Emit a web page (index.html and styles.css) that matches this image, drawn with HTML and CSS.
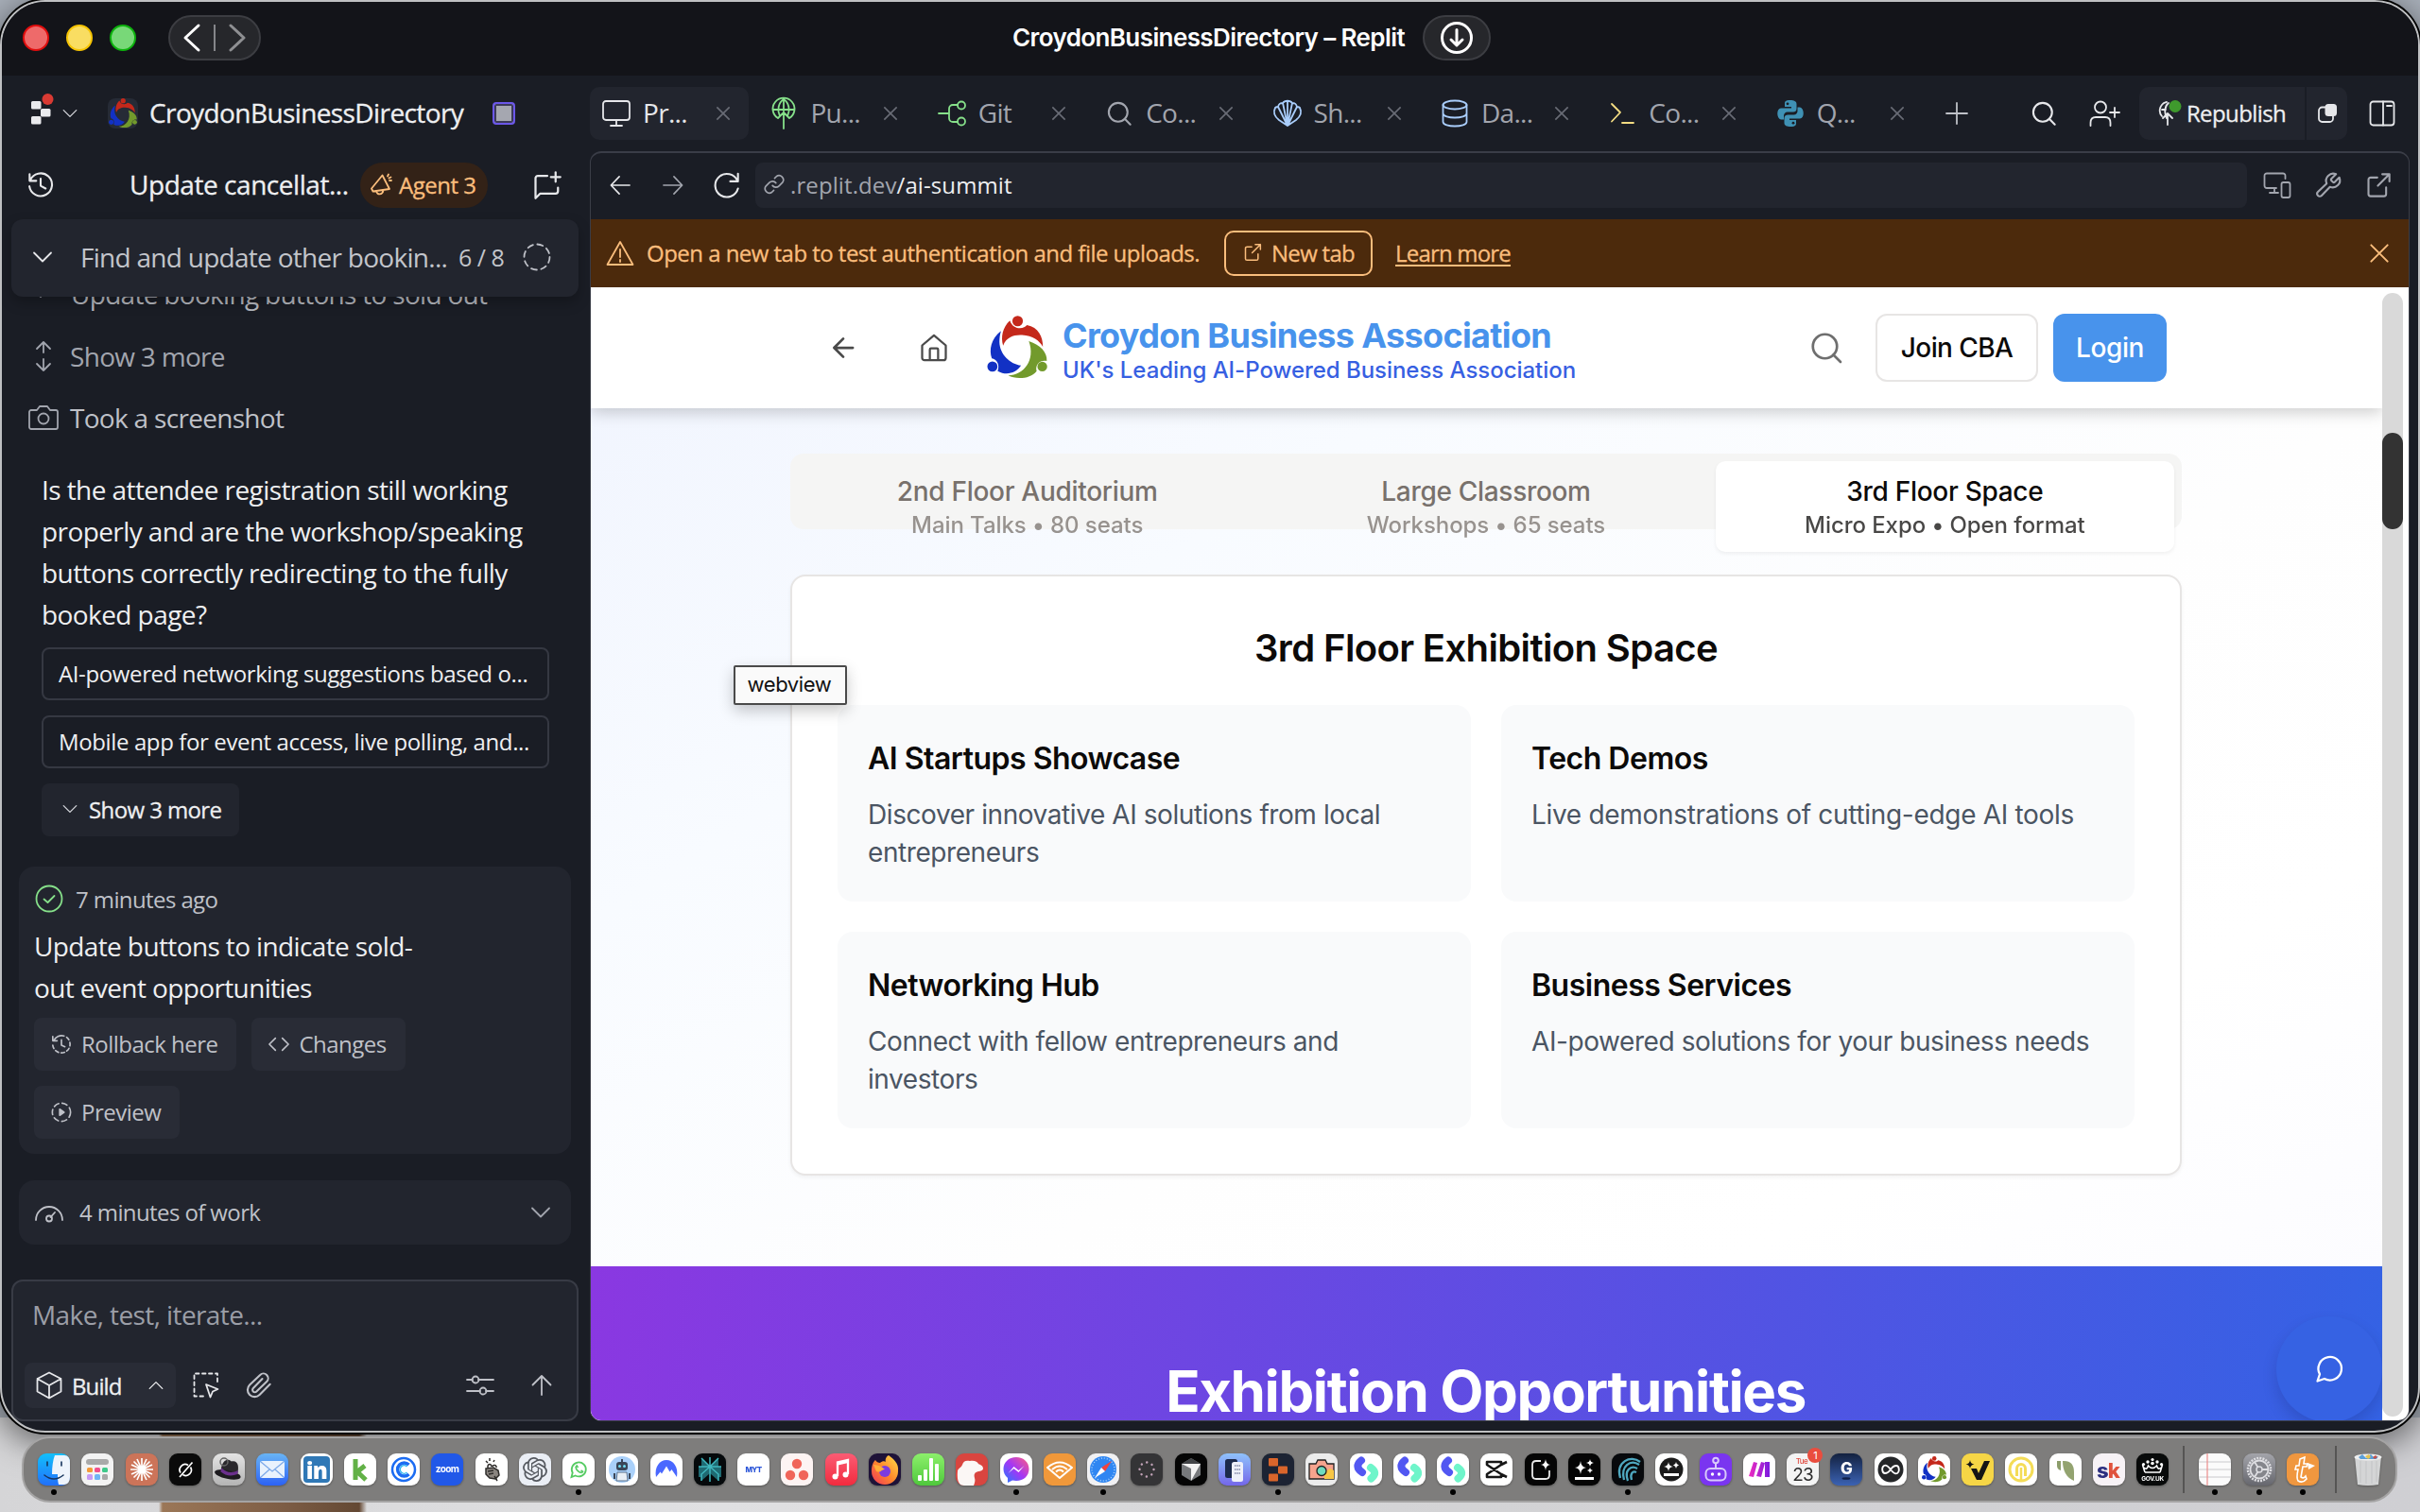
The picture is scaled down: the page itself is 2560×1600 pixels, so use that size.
FILE: index.html
```html
<!DOCTYPE html>
<html lang="en">
<head>
<meta charset="utf-8">
<title>CroydonBusinessDirectory – Replit</title>
<link rel="stylesheet" href="styles.css">
</head>
<body>
<svg class="defs" aria-hidden="true">
  <symbol id="cba" viewBox="0 0 62 66">
    <circle cx="31.5" cy="5.6" r="5.4" fill="#c4281b"/><path fill="#c4281b" d="M23.5 5C16 12 14 22 16.6 30.7 20 22 28 19.5 36 20c11 .5 18 6 21.400 12C57.500 22 53 12 41 9.800 38 14 27 15 23.500 5Z"/>
    <circle cx="5.600" cy="52.300" r="5.200" fill="#1231c4"/><path fill="#1231c4" d="M14.400 15.700C4 24 2 35 5 44c5 1 8.500 6 6 13 9 5 19 2 24-5.700C24 50 13 40 12.800 27c0-4 .6-8 1.600-11.300Z"/>
    <circle cx="56.800" cy="52.300" r="5" fill="#729a2c"/><path fill="#729a2c" d="M43 26.300C55 30 62 38 61.400 46.500 55 45 49 50 51 57c-6 8-21 9-29.200 4.500C38 61 50 46 43 26.300Z"/>
  </symbol>
  <symbol id="x" viewBox="0 0 24 24"><path d="M4 4l16 16M20 4L4 20"/></symbol>
  <symbol id="down" viewBox="0 0 24 24"><path d="M3 7.500l9 9 9-9"/></symbol>
  <symbol id="search" viewBox="0 0 24 24"><circle cx="11" cy="11" r="8.500"/><path d="M17 17l5 5"/></symbol>
  <symbol id="ext" viewBox="0 0 24 24"><path d="M11 5H5a2 2 0 0 0-2 2v13a2 2 0 0 0 2 2h12a2 2 0 0 0 2-2v-6M15.500 2H22v6.500M22 2L11.500 12.500"/></symbol>
  <symbol id="hist" viewBox="0 0 24 24"><path d="M2 2v6h6M2.500 7.500A10.300 10.300 0 1 1 1.800 13M12 6v6.500l4.500 2.500"/></symbol>
  <symbol id="split" viewBox="0 0 34 34"><rect width="34" height="34" rx="9" fill="#fff"/><path d="M12 7.500c-5 4-5 8.500 1 12.500" stroke="#5257f2" stroke-width="8" fill="none" stroke-linecap="round"/><path d="M22 15c5.500 4 5.500 7 .5 11.500" stroke="#6ff5ca" stroke-width="8" fill="none" stroke-linecap="round"/></symbol>
  <linearGradient id="gFinder" x2="0" y2="1"><stop stop-color="#12c0fb"/><stop offset="1" stop-color="#2270fb"/></linearGradient>
  <linearGradient id="gMail" x2="0" y2="1"><stop stop-color="#68b4f5"/><stop offset="1" stop-color="#2c62f4"/></linearGradient>
  <linearGradient id="gMusic" x2="0" y2="1"><stop stop-color="#fb5c74"/><stop offset="1" stop-color="#f22b3e"/></linearGradient>
  <linearGradient id="gFox" x1="1" x2="0" y2="1"><stop stop-color="#ffe04a"/><stop offset=".5" stop-color="#ff8a2c"/><stop offset="1" stop-color="#f0335a"/></linearGradient>
  <linearGradient id="gNum" x2="0" y2="1"><stop stop-color="#8cf06b"/><stop offset="1" stop-color="#4fc83c"/></linearGradient>
  <linearGradient id="gMsg" x1="1" x2="0" y2="1"><stop stop-color="#ff5f80"/><stop offset=".5" stop-color="#a436f5"/><stop offset="1" stop-color="#1f7cff"/></linearGradient>
  <linearGradient id="gPhone" x2="0" y2="1"><stop stop-color="#8fc2fb"/><stop offset="1" stop-color="#7467ea"/></linearGradient>
  <linearGradient id="gMake" x2="1"><stop stop-color="#f02bc0"/><stop offset="1" stop-color="#7a1be0"/></linearGradient>
  <linearGradient id="gG" x2="0" y2="1"><stop stop-color="#13213f"/><stop offset="1" stop-color="#3b62b3"/></linearGradient>
  <linearGradient id="gGrey" x2="0" y2="1"><stop stop-color="#e4e4e4"/><stop offset="1" stop-color="#b4b4b4"/></linearGradient>
  <linearGradient id="gGear" x2="0" y2="1"><stop stop-color="#a3a4aa"/><stop offset="1" stop-color="#66676e"/></linearGradient>
</svg>

<div class="desktop">
<main class="window">
  <header class="titlebar">
    <div class="lights"><i class="red"></i><i class="yellow"></i><i class="green"></i></div>
    <div class="navpill">
      <svg width="20" height="30" viewBox="0 0 20 30" class="w3 white"><path d="M17 2L3 15l14 13"/></svg>
      <b></b>
      <svg width="20" height="30" viewBox="0 0 20 30" class="w3 mid"><path d="M3 2l14 13L3 28"/></svg>
    </div>
    <h1>CroydonBusinessDirectory – Replit</h1>
    <div class="download"><svg width="36" height="36" viewBox="0 0 36 36" class="w3 white"><circle cx="18" cy="18" r="15.500"/><path d="M18 9.500v16M12 20l6 6 6-6"/></svg></div>
  </header>

  <div class="workspace">
    <aside class="sidebar">
      <div class="project">
        <svg class="replit" width="24" height="36" viewBox="0 0 24 36"><g fill="#e9eaed"><rect y="8" width="10.500" height="8.500" rx="1.500"/><rect x="10" y="16" width="10.500" height="8.500" rx="1.500"/><rect y="24" width="10.500" height="8.500" rx="1.500"/></g><circle cx="17.500" cy="6" r="6" fill="#d93a33"/></svg>
        <svg class="chev w2 soft" width="18" height="18" viewBox="0 0 24 24"><use href="#down"/></svg>
        <span class="appicon"><svg width="32" height="32"><use href="#cba"/></svg></span>
        <strong>CroydonBusinessDirectory</strong>
        <span class="boost"></span>
      </div>

      <div class="thread">
        <svg class="w2 bright" width="30" height="28" viewBox="0 0 24 24"><use href="#hist"/></svg>
        <strong>Update cancellat...</strong>
        <span class="agent"><svg width="24" height="24" viewBox="0 0 24 24" class="w2 orange"><path d="M13.500 2.500L21 17 3.500 19.500 2 16.500ZM7.500 19.500c0 4 6 4 7-1M19 3.500l1-2M21 8h2M20.500 5.500l2-1"/></svg>Agent 3</span>
        <svg class="w2 bright newchat" width="30" height="30" viewBox="0 0 24 24"><path d="M12 4H4a2 2 0 0 0-2 2v17l4-4h13a2 2 0 0 0 2-2v-3M19 1v8M15 5h8"/></svg>
      </div>

      <div class="task">
        <svg class="w2 bright" width="24" height="24" viewBox="0 0 24 24"><use href="#down"/></svg>
        <span class="name">Find and update other bookin...</span>
        <span class="count">6 / 8</span>
        <svg width="30" height="30" viewBox="0 0 30 30" class="w2 grey"><circle cx="15" cy="15" r="13.500" stroke-dasharray="6 4.600"/></svg>
      </div>

      <section class="chat">
        <div class="step first"><svg class="w2 dim" width="18" height="18" viewBox="0 0 24 24"><use href="#down"/></svg><span>Update booking buttons to sold out</span></div>
        <div class="step more"><svg class="w2 dim" width="32" height="34" viewBox="0 0 32 34"><path d="M16 13V2M9 9l7-7 7 7M16 20v12M9 25l7 7 7-7"/></svg><span>Show 3 more</span></div>
        <div class="step shot"><svg class="w2 dim" width="32" height="28" viewBox="0 0 32 28"><path d="M3 6h6l3-4h8l3 4h6a2 2 0 0 1 2 2v16a2 2 0 0 1-2 2H3a2 2 0 0 1-2-2V8a2 2 0 0 1 2-2Z"/><circle cx="16" cy="15" r="5.500"/></svg><span>Took a screenshot</span></div>
        <p class="question">Is the attendee registration still working<br>properly and are the workshop/speaking<br>buttons correctly redirecting to the fully<br>booked page?</p>
        <div class="option">AI-powered networking suggestions based o...</div>
        <div class="option">Mobile app for event access, live polling, and...</div>
        <div class="showmore"><svg class="w2 soft" width="18" height="18" viewBox="0 0 24 24"><use href="#down"/></svg>Show 3 more</div>

        <article class="checkpoint">
          <div class="when"><svg width="30" height="30" viewBox="0 0 30 30" class="w2 lime"><circle cx="15" cy="15" r="13.500"/><path d="M9.500 15.500l4 3.500 7-7"/></svg>7 minutes ago</div>
          <p>Update buttons to indicate sold-<br>out event opportunities</p>
          <div class="actions">
            <span><svg class="w2 grey" width="22" height="22" viewBox="0 0 24 24"><path d="M2 3v5h5M3 8a10 10 0 0 1 12-5.500M12 7v6l4 2"/><path d="M18 4a10 10 0 1 1-16 9" stroke-dasharray="4 3"/></svg>Rollback here</span>
            <span><svg class="w2 grey" width="22" height="22" viewBox="0 0 24 24"><path d="M8 5l-7 7 7 7M16 5l7 7-7 7"/></svg>Changes</span>
            <span><svg class="w2 grey" width="22" height="22" viewBox="0 0 24 24"><circle cx="12" cy="12" r="10.500" stroke-dasharray="6 4"/><path d="M10 8.500v7l5-3.500Z" fill="#bfc1c8"/></svg>Preview</span>
          </div>
        </article>

        <div class="work"><svg width="30" height="24" viewBox="0 0 30 24" class="w2 grey"><path d="M1 20a14 14 0 0 1 28 0M21 12l-4.500 5"/><circle cx="15" cy="18.500" r="3"/></svg><span>4 minutes of work</span><svg class="w2 dim" width="24" height="24" viewBox="0 0 24 24"><use href="#down"/></svg></div>
      </section>

      <section class="composer">
        <p>Make, test, iterate...</p>
        <div class="tools">
          <span class="build"><svg width="28" height="30" viewBox="0 0 28 30" class="w2 bright"><path d="M14 1.500l12.500 6.500v13.500L14 28.500 1.500 21.500V8ZM1.500 8L14 15l12.500-7M14 15v13.500"/></svg>Build<svg class="w2 bright up" width="18" height="18" viewBox="0 0 24 24"><use href="#down"/></svg></span>
          <svg width="28" height="28" viewBox="0 0 28 28" class="w2 bright"><path d="M26 10V1.500H1.500v24H12" stroke-dasharray="3.500 3.500"/><path d="M14 13l12.500 5-5.500 2.500-2.500 6Z"/></svg>
          <svg width="28" height="28" viewBox="0 0 24 24" class="w2 grey"><path d="M22 11l-9.500 9.500a6.200 6.200 0 0 1-9-9L13 2.500a4.200 4.200 0 0 1 6 6L9.700 17.500a2.100 2.100 0 0 1-3-3L15 6"/></svg>
          <i class="fill"></i>
          <svg width="30" height="24" viewBox="0 0 30 24" class="w2 grey"><path d="M1 6h6M13 6h16M1 18h14M21 18h8"/><circle cx="10" cy="6" r="3.500"/><circle cx="18" cy="18" r="3.500"/></svg>
          <svg width="24" height="24" viewBox="0 0 24 24" class="w2 grey send"><path d="M12 22V2.500M2.500 11.500L12 2l9.500 9.500"/></svg>
        </div>
      </section>
    </aside>

    <section class="main">
      <nav class="tabs">
        <div class="tab active"><svg width="30" height="30" viewBox="0 0 30 30" class="w2 bright"><rect x="1" y="2" width="28" height="20" rx="3"/><path d="M15 22v6M9 28h12"/></svg><span>Pr...</span><svg class="close" width="20" height="20" viewBox="0 0 24 24"><use href="#x"/></svg></div>
        <div class="tab"><svg width="30" height="34" viewBox="0 0 30 34" class="w2 lime"><path d="M9 22A11.500 11.500 0 1 1 21 22M4 13h22M11 20c-3-6-2-14 4-18 6 4 7 12 4 18M15 33V15M9 22l6-6 6 6M15 2v12"/></svg><span>Pu...</span><svg class="close" width="20" height="20" viewBox="0 0 24 24"><use href="#x"/></svg></div>
        <div class="tab"><svg width="30" height="28" viewBox="0 0 30 28" class="w2 lime"><path d="M1 14h11M21 5h-5a4 4 0 0 0-4 4v10a4 4 0 0 0 4 4h5"/><circle cx="25" cy="5.500" r="4"/><circle cx="25" cy="22.500" r="4"/></svg><span>Git</span><svg class="close" width="20" height="20" viewBox="0 0 24 24"><use href="#x"/></svg></div>
        <div class="tab"><svg width="28" height="28" viewBox="0 0 24 24" class="w2 dim"><use href="#search"/></svg><span>Co...</span><svg class="close" width="20" height="20" viewBox="0 0 24 24"><use href="#x"/></svg></div>
        <div class="tab"><svg width="30" height="30" viewBox="0 0 30 30" class="w2 sky"><path d="M15 28L6 22C1 18 0 13 2 9c1-1 2-1 3-1 1-4 3-4 5-4 2-3 8-3 10 0 2 0 4 0 5 4 1 0 2 0 3 1 2 4 1 9-4 13ZM15 28L5 8M15 28L10 4M15 28V2M15 28l5-24M15 28L25 8"/></svg><span>Sh...</span><svg class="close" width="20" height="20" viewBox="0 0 24 24"><use href="#x"/></svg></div>
        <div class="tab"><svg width="30" height="30" viewBox="0 0 30 30" class="w2 sky"><ellipse cx="15" cy="6" rx="12.500" ry="4.500"/><path d="M2.500 6v18c0 6 25 6 25 0V6M2.500 15c0 6 25 6 25 0"/></svg><span>Da...</span><svg class="close" width="20" height="20" viewBox="0 0 24 24"><use href="#x"/></svg></div>
        <div class="tab"><svg width="30" height="26" viewBox="0 0 30 26" class="w2 gold"><path d="M4 3l9 9-9 9.500M15 23h12"/></svg><span>Co...</span><svg class="close" width="20" height="20" viewBox="0 0 24 24"><use href="#x"/></svg></div>
        <div class="tab"><svg width="30" height="30" viewBox="0 0 30 30"><g fill="#3f91b4"><path d="M15 1c-6 0-6 2-6 4v3h7v1.500H5c-5 0-5 11 0 12h3v-4c0-2 1.500-4 4-4h6c2 0 3.500-1 3.500-3.500V5c0-3-3-4-6.500-4Z"/><path d="M15 29c6 0 6-2 6-4v-3h-7v-1.500h11c5 0 5-11 0-12h-2.500v4c0 2-1.500 4-4 4h-6c-2 0-4 1-4 3.500V25c0 3 3 4 6.500 4Z"/></g><circle cx="12" cy="4.800" r="1.400" fill="#1a1d25"/><circle cx="18" cy="25.200" r="1.400" fill="#1a1d25"/></svg><span>Q...</span><svg class="close" width="20" height="20" viewBox="0 0 24 24"><use href="#x"/></svg></div>
        <svg class="w2 grey plus" width="24" height="24" viewBox="0 0 24 24"><path d="M12 1v22M1 12h22"/></svg>
        <i class="fill"></i>
        <svg class="w2 bright" width="28" height="28" viewBox="0 0 24 24"><use href="#search"/></svg>
        <svg class="w2 bright invite" width="32" height="28" viewBox="0 0 32 28"><circle cx="12" cy="7.500" r="6"/><path d="M1.500 27v-3c0-3.500 2-6 5.500-6h10c3.500 0 5.500 2.500 5.500 6v3M27 8v10M22 13h10"/></svg>
        <div class="publish"><span class="pubmain"><svg width="26" height="28" viewBox="0 0 26 28" class="w2 bright"><path d="M4 18C-1 12 3 4 9 3M4 11h4M9 20c-3-6-2-13 2-16M10 27V15M5 20l5-5 5 5"/><circle cx="18" cy="7.500" r="6.500" fill="#3f9a2d" stroke="none"/></svg>Republish</span><span class="pubside"><svg width="20" height="20" viewBox="0 0 20 20"><rect x="1" y="3.500" width="15" height="15.500" rx="3.500" fill="none" stroke="#e6e7ea" stroke-width="1.800"/><rect x="7.500" y="0" width="12.500" height="13" rx="3.500" fill="#e6e7ea"/></svg></span></div>
        <svg class="w2 bright layout" width="28" height="28" viewBox="0 0 28 28"><rect x="1.500" y="1.500" width="25" height="25" rx="3"/><path d="M15 1.500v25M19 6h5"/></svg>
      </nav>

      <div class="pane">
        <div class="address">
          <svg class="w2 bright back" width="22" height="22" viewBox="0 0 24 24"><path d="M23 12H2M11 2L1.500 12l9.500 10"/></svg>
          <svg class="w2 dim fwd" width="22" height="22" viewBox="0 0 24 24"><path d="M1 12h21M13 2l9.500 10L13 22"/></svg>
          <svg class="w2 bright reload" width="30" height="28" viewBox="0 0 24 24"><path d="M22 1.500v7h-7M21.500 8A10.500 10.500 0 1 0 22 15"/></svg>
          <div class="url"><svg width="22" height="22" viewBox="0 0 24 24" class="w2 dim"><path d="M10 13.500a5 5 0 0 0 7.500.5l4-4a5 5 0 0 0-7-7l-2 2M14 10.500a5 5 0 0 0-7.500-.5l-4 4a5 5 0 0 0 7 7l2-2"/></svg><span><em>.replit.dev</em>/ai-summit</span></div>
          <svg class="w2 dim" width="30" height="28" viewBox="0 0 30 28"><path d="M14 17H4a2.500 2.500 0 0 1-2.500-2.500V4A2.500 2.500 0 0 1 4 1.500h17A2.500 2.500 0 0 1 23.500 4v3M12 17v5M7 22h9"/><rect x="19.500" y="11" width="9" height="16" rx="2"/></svg>
          <svg class="w2 dim" width="28" height="28" viewBox="0 0 24 24"><path d="M14.700 6.300a1 1 0 0 0 0 1.400l1.600 1.600a1 1 0 0 0 1.400 0l4.300-4.300a6.500 6.500 0 0 1-8.500 8.500l-7.600 7.900a2.300 2.300 0 0 1-3.300-3.300l7.900-7.600A6.500 6.500 0 0 1 19 2Z"/></svg>
          <svg class="w2 dim" width="28" height="28" viewBox="0 0 24 24"><use href="#ext"/></svg>
        </div>
        <div class="banner">
          <svg width="30" height="28" viewBox="0 0 30 28" class="w2 orange"><path d="M15 2L28.500 26h-27ZM15 10v8M15 21v2"/></svg>
          <span class="msg">Open a new tab to test authentication and file uploads.</span>
          <span class="newtab"><svg width="20" height="20" viewBox="0 0 24 24" class="w2 orange"><use href="#ext"/></svg>New tab</span>
          <span class="learn">Learn more</span>
          <i class="fill"></i>
          <svg width="26" height="26" viewBox="0 0 24 24" class="w2 orange"><use href="#x"/></svg>
        </div>

        <div class="webview">
          <div class="site">
            <header class="sitehead">
              <svg width="22" height="22" viewBox="0 0 24 24" class="w3 ink"><path d="M23 12H2M12 1.500L1.500 12 12 22.500"/></svg>
              <svg width="30" height="30" viewBox="0 0 24 24" class="w2 ink home"><path d="M2 10l10-8.500L22 10v10.500a2 2 0 0 1-2 2H4a2 2 0 0 1-2-2ZM8.500 22.500v-9a1 1 0 0 1 1-1h5a1 1 0 0 1 1 1v9"/></svg>
              <svg width="64" height="68"><use href="#cba"/></svg>
              <div class="brand"><strong>Croydon Business Association</strong><span>UK's Leading AI-Powered Business Association</span></div>
              <i class="fill"></i>
              <svg width="36" height="36" viewBox="0 0 24 24" class="w2 ash"><use href="#search"/></svg>
              <span class="join">Join CBA</span>
              <span class="login">Login</span>
            </header>
            <section class="venue">
              <div class="floors">
                <div><b>2nd Floor Auditorium</b><span>Main Talks • 80 seats</span></div>
                <div><b>Large Classroom</b><span>Workshops • 65 seats</span></div>
                <div class="on"><b>3rd Floor Space</b><span>Micro Expo • Open format</span></div>
              </div>
              <div class="card">
                <h2>3rd Floor Exhibition Space</h2>
                <div class="grid">
                  <div><h3>AI Startups Showcase</h3><p>Discover innovative AI solutions from local entrepreneurs</p></div>
                  <div><h3>Tech Demos</h3><p class="loose">Live demonstrations of cutting-edge AI tools</p></div>
                  <div><h3>Networking Hub</h3><p>Connect with fellow entrepreneurs and investors</p></div>
                  <div><h3>Business Services</h3><p>AI-powered solutions for your business needs</p></div>
                </div>
              </div>
            </section>
            <section class="promo"><h2>Exhibition Opportunities</h2>
              <span class="bubble"><svg width="30" height="30" viewBox="0 0 24 24" class="w2 white"><path d="M7.900 20A9.800 9.800 0 1 0 4 16.100L2 22Z"/></svg></span>
            </section>
          </div>
          <div class="scroll"><i></i></div>
        </div>
      </div>
    </section>
  </div>
</main>
<div class="tooltip">webview</div>

<footer class="dock">
  <span class="run"><svg viewBox="0 0 34 34"><rect width="34" height="34" rx="9" fill="url(#gFinder)"/><path d="M18 2h10q6 0 6 8v15q0 7-6 8h-6c-1-4-1-7-1-11h-6C15 14 16 7 18 2Z" fill="#eef4fc"/><path d="M10 9v4M25 9v4M7 23q10 8 20 0" stroke="#16345c" stroke-width="1.600" fill="none" stroke-linecap="round"/></svg></span>
  <span><svg viewBox="0 0 34 34"><rect width="34" height="34" rx="9" fill="#f3f3f3"/><rect x="5" y="6" width="24" height="6" rx="3" fill="#a9a9a9"/><rect x="6" y="15" width="6" height="5" rx="1.500" fill="#f59a37"/><rect x="14" y="15" width="6" height="5" rx="1.500" fill="#f2508c"/><rect x="22" y="15" width="6" height="5" rx="1.500" fill="#3fc98b"/><rect x="6" y="22" width="6" height="6" rx="1.500" fill="#c89af5"/><rect x="14" y="22" width="6" height="6" rx="1.500" fill="#6fb5f5"/><rect x="22" y="22" width="6" height="6" rx="1.500" fill="#a9a9a9"/></svg></span>
  <span><svg viewBox="0 0 34 34"><rect width="34" height="34" rx="9" fill="#cc7459"/><path d="M17 5v24M5 17h24M8.500 8.500l17 17M25.500 8.500l-17 17M12 6l10 22M22 6L12 28M6 12l22 10M28 12L6 22" stroke="#fff" stroke-width="1.700"/></svg></span>
  <span><svg viewBox="0 0 34 34"><rect width="34" height="34" rx="9" fill="#0a0a0a"/><path d="M20 12.500a5.800 5.800 0 0 0-8 8M14.500 22.500a5.800 5.800 0 0 0 8-8M11 25L24.500 9.500" fill="none" stroke="#fff" stroke-width="1.700"/></svg></span>
  <span><svg viewBox="0 0 34 34"><rect width="34" height="34" rx="9" fill="url(#gGrey)"/><g transform="rotate(12 17 17)"><path d="M9 19C8 9 13 5 18 8c7-3 9 4 9 11Z" fill="#2a282c"/><ellipse cx="17" cy="22.500" rx="14" ry="4.500" fill="#1d1b1f"/><path d="M9 17q9 6 18-1v4q-9 6-18 1Z" fill="#6a2f8c"/></g><circle cx="12" cy="9" r="4" fill="none" stroke="#666" stroke-width="1.500"/></svg></span>
  <span><svg viewBox="0 0 34 34"><rect width="34" height="34" rx="9" fill="url(#gMail)"/><rect x="4" y="8" width="26" height="18" rx="2.500" fill="#e9f2fd"/><path d="M5 9l12 10L29 9M5 25l9-8M29 25l-9-8" stroke="#7da9e8" stroke-width="1.300" fill="none"/></svg></span>
  <span><svg viewBox="0 0 34 34"><rect width="34" height="34" rx="9" fill="#fff"/><rect x="3" y="3" width="28" height="28" rx="4" fill="#2f78b6"/><text x="17" y="27" text-anchor="middle" font-family="Open Sans" font-weight="800" font-size="24" fill="#fff">in</text></svg></span>
  <span><svg viewBox="0 0 34 34"><rect width="34" height="34" rx="9" fill="#fff"/><path d="M12 6v22M22 13l-8 6.500L23 28" stroke="#62b146" stroke-width="5" fill="none"/></svg></span>
  <span><svg viewBox="0 0 34 34"><rect width="34" height="34" rx="9" fill="#fff"/><circle cx="17" cy="17" r="12" fill="none" stroke="#1b6cf2" stroke-width="2.500"/><path d="M22.500 12a7 7 0 1 0 0 10" stroke="#1b6cf2" stroke-width="3.500" fill="none"/><path d="M20.500 14a4.200 4.200 0 1 0 0 6" stroke="#31b8f0" stroke-width="1.500"/></svg></span>
  <span><svg viewBox="0 0 34 34"><rect width="34" height="34" rx="9" fill="#2158e8"/><text x="17" y="20" text-anchor="middle" font-family="Inter" font-weight="700" font-size="10" fill="#fff">zoom</text></svg></span>
  <span><svg viewBox="0 0 34 34"><rect width="34" height="34" rx="9" fill="#fff"/><path d="M11 16l8-1 5 3 1 5-4 4-6-1-4-4Z" fill="#8a8580" stroke="#2e2c2a" stroke-width="1.500"/><path d="M13 15a2 3 0 1 1 4-1M18 14a2 2 0 1 1 4 1M11 8l2 2M15 5v3M20 7l-1 2M20 24l3 5M13 19l6-1M14 22l5-1" stroke="#2e2c2a" stroke-width="1.500" fill="none"/></svg></span>
  <span><svg viewBox="0 0 34 34"><rect width="34" height="34" rx="9" fill="#eaeef5"/><path transform="translate(4 4) scale(1.080)" fill="#555960" d="M22.2819 9.8211a5.9847 5.9847 0 0 0-.5157-4.9108 6.0462 6.0462 0 0 0-6.5098-2.9A6.0651 6.0651 0 0 0 4.9807 4.1818a5.9847 5.9847 0 0 0-3.9977 2.9 6.0462 6.0462 0 0 0 .7427 7.0966 5.98 5.98 0 0 0 .511 4.9107 6.051 6.051 0 0 0 6.5146 2.9001A5.9847 5.9847 0 0 0 13.2599 24a6.0557 6.0557 0 0 0 5.7718-4.2058 5.9894 5.9894 0 0 0 3.9977-2.9001 6.0557 6.0557 0 0 0-.7475-7.0729zm-9.022 12.6081a4.4755 4.4755 0 0 1-2.8764-1.0408l.1419-.0804 4.7783-2.7582a.7948.7948 0 0 0 .3927-.6813v-6.7369l2.02 1.1686a.071.071 0 0 1 .038.052v5.5826a4.504 4.504 0 0 1-4.4945 4.4944zm-9.6607-4.1254a4.4708 4.4708 0 0 1-.5346-3.0137l.142.0852 4.783 2.7582a.7712.7712 0 0 0 .7806 0l5.8428-3.3685v2.3324a.0804.0804 0 0 1-.0332.0615L9.74 19.9502a4.4992 4.4992 0 0 1-6.1408-1.6464zM2.3408 7.8956a4.485 4.485 0 0 1 2.3655-1.9728V11.6a.7664.7664 0 0 0 .3879.6765l5.8144 3.3543-2.0201 1.1685a.0757.0757 0 0 1-.071 0l-4.8303-2.7865A4.504 4.504 0 0 1 2.3408 7.872zm16.5963 3.8558L13.1038 8.364 15.1192 7.2a.0757.0757 0 0 1 .071 0l4.8303 2.7913a4.4944 4.4944 0 0 1-.6765 8.1042v-5.6772a.79.79 0 0 0-.407-.667zm2.0107-3.0231l-.142-.0852-4.7735-2.7818a.7759.7759 0 0 0-.7854 0L9.409 9.2297V6.8974a.0662.0662 0 0 1 .0284-.0615l4.8303-2.7866a4.4992 4.4992 0 0 1 6.6802 4.66zM8.3065 12.863l-2.02-1.1638a.0804.0804 0 0 1-.038-.0567V6.0742a4.4992 4.4992 0 0 1 7.3757-3.4537l-.142.0805L8.704 5.459a.7948.7948 0 0 0-.3927.6813zm1.0976-2.3654l2.602-1.4998 2.6069 1.4998v2.9994l-2.5974 1.4997-2.6067-1.4997Z"/></svg></span>
  <span class="run"><svg viewBox="0 0 34 34"><rect width="34" height="34" rx="9" fill="#fff"/><path d="M9.500 25l1.200-4.500a7.500 7.500 0 1 1 3 3Z" fill="none" stroke="#55cb62" stroke-width="1.800"/><path d="M14 14c0 3 3.500 6.500 6.500 6.500M14 14l1.200-1 1.300 2M20.500 20.500l1-1.200-2-1.300" fill="none" stroke="#55cb62" stroke-width="1.600"/></svg></span>
  <span><svg viewBox="0 0 34 34"><rect width="34" height="34" rx="9" fill="#fff"/><circle cx="17" cy="17" r="14" fill="#a9d0fa"/><rect x="11" y="9" width="12" height="9" rx="3" fill="#3b4658"/><circle cx="14.500" cy="13.500" r="1.500" fill="#6fe0f5"/><circle cx="19.500" cy="13.500" r="1.500" fill="#6fe0f5"/><path d="M12 20h10l1 9H11Z" fill="#e8eef5" stroke="#58708c"/><path d="M17 6v3M9 21v6M25 21v6" stroke="#3b4658" stroke-width="2"/></svg></span>
  <span><svg viewBox="0 0 34 34"><rect width="34" height="34" rx="9" fill="#fff"/><path d="M6 25C4 14 10 7 17 7s13 7 11 18l-5.500-8-2 2.500-3.500-6-5 8-1.500-2Z" fill="#4a68ff"/></svg></span>
  <span><svg viewBox="0 0 34 34"><rect width="34" height="34" rx="9" fill="#05090b"/><path d="M8 5l9 9 9-9v9h3v11h-3v4l-9-8-9 8v-4H5V14h3Z" fill="#1f6a72"/><path d="M17 4v26M8 5l9 9 9-9M8 29v-7l9-8 9 8v7M5 14h24" stroke="#3fb6bd" stroke-width="1.500" fill="none"/></svg></span>
  <span><svg viewBox="0 0 34 34"><rect width="34" height="34" rx="9" fill="#fff"/><text x="17" y="20" text-anchor="middle" font-family="Inter" font-weight="800" font-size="8" fill="#2b55d8">MYT</text></svg></span>
  <span><svg viewBox="0 0 34 34"><rect width="34" height="34" rx="9" fill="#fdf4f3"/><g fill="#f0655a"><circle cx="17" cy="11" r="5.200"/><circle cx="10" cy="23" r="5.200"/><circle cx="24" cy="23" r="5.200"/></g></svg></span>
  <span><svg viewBox="0 0 34 34"><rect width="34" height="34" rx="9" fill="url(#gMusic)"/><path d="M13 24V9.500l11-2.500v15" stroke="#fff" stroke-width="2.300" fill="none"/><path d="M13 11l11-2.500" stroke="#fff" stroke-width="3"/><circle cx="10.500" cy="24.500" r="3" fill="#fff"/><circle cx="21.500" cy="22.500" r="3" fill="#fff"/></svg></span>
  <span><svg viewBox="0 0 34 34"><rect width="34" height="34" rx="9" fill="#1e1238"/><path d="M21 2c5 4 11 8 10 17A14 14 0 0 1 3 19C3 12 5 9 7 7c1 2 3 3 5 3 2-2 5-2 6-1-1-3 1-6 3-7Z" fill="url(#gFox)"/><circle cx="17" cy="19" r="6" fill="#7b3be0"/><path d="M5 12c6 0 10 3 12 5-4 0-4 4-9 2Z" fill="#ffae38"/></svg></span>
  <span><svg viewBox="0 0 34 34"><rect width="34" height="34" rx="9" fill="url(#gNum)"/><g fill="#fff"><rect x="6" y="23" width="4" height="6" rx="1"/><rect x="12" y="17" width="4" height="12" rx="1"/><rect x="18" y="5" width="4" height="24" rx="1"/><rect x="24" y="11" width="4" height="18" rx="1"/></g></svg></span>
  <span><svg viewBox="0 0 34 34"><rect width="34" height="34" rx="9" fill="#d9453f"/><path d="M2 19c0-3 4-4 5-7 1-4 4-5 8-4 5-1 8 1 9 3 2 1 5 2 5 5 0 2-3 3-5 3-4 1-5 3-4 7 1 3 0 5-1 8H9C4 34 1 30 2 19Z" fill="#fbf7f5"/></svg></span>
  <span class="run"><svg viewBox="0 0 34 34"><rect width="34" height="34" rx="9" fill="#fff"/><path d="M17 4c8 0 13.500 5.500 13.500 12.500S25 29 17 29l-4-.5-5 2.500v-5C5 23.500 3.500 20.500 3.500 16.500 3.500 9.500 9 4 17 4Z" fill="url(#gMsg)"/><path d="M8.500 21l6-7 5 4 6-5-6 7-5-4Z" fill="#fff"/></svg></span>
  <span><svg viewBox="0 0 34 34"><rect width="34" height="34" rx="9" fill="#f0983a"/><path d="M4 15q13-11 26 0L17 26ZM9 17q8-7 16 0M13 19.500q4-4 8 0" stroke="#fff" stroke-width="2" fill="none" stroke-linejoin="round"/></svg></span>
  <span class="run"><svg viewBox="0 0 34 34"><rect width="34" height="34" rx="9" fill="#f1f1f3"/><circle cx="17" cy="17" r="14" fill="#2f86f2"/><circle cx="17" cy="17" r="12" fill="none" stroke="#a9d2fb" stroke-width="1.500" stroke-dasharray="1 2"/><path d="M26 8l-7 11-4-4Z" fill="#f2433c"/><path d="M8 26l7-11 4 4Z" fill="#fff"/></svg></span>
  <span><svg viewBox="0 0 34 34"><rect width="34" height="34" rx="9" fill="#343436"/><circle cx="17" cy="17" r="7.500" fill="none" stroke="#c2a3b8" stroke-width="2.400" stroke-dasharray=".1 5.790" stroke-linecap="round"/></svg></span>
  <span><svg viewBox="0 0 34 34"><rect width="34" height="34" rx="9" fill="#050505"/><path d="M17 5l10 6v12l-10 6-10-6V11Z" fill="#77797c"/><path d="M7 11h20L17 29V16Z" fill="#f3f3f3"/><path d="M17 5l10 6H7Z" fill="#424447"/></svg></span>
  <span><svg viewBox="0 0 34 34"><rect width="34" height="34" rx="9" fill="url(#gPhone)"/><rect x="7" y="6" width="13" height="20" rx="2.500" fill="#1c2a4c"/><rect x="14" y="9" width="12" height="21" rx="2.500" fill="#eef0fa"/><path d="M17 13h6M17 17h6M17 21h6" stroke="#9ba0ba" stroke-width="2" stroke-dasharray="1.500 .8"/></svg></span>
  <span class="run"><svg viewBox="0 0 34 34"><rect width="34" height="34" rx="9" fill="#1c2333"/><g fill="#d9652b"><rect x="7" y="5" width="10" height="8.500" rx="1"/><rect x="17" y="13.500" width="10" height="8" rx="1"/><rect x="7" y="21.500" width="10" height="8" rx="1"/></g></svg></span>
  <span><svg viewBox="0 0 34 34"><rect width="34" height="34" rx="9" fill="#ececec"/><path d="M4 11h7l2-4h8l2 4h7v16H4Z" fill="#f6a38e" stroke="#222" stroke-width="1.300"/><path d="M20 20l6-4 4 2v9H20Z" fill="#f7c646"/><circle cx="17" cy="18.500" r="5" fill="#6fdcc0" stroke="#222" stroke-width="1.300"/></svg></span>
  <span><svg><use href="#split"/></svg></span>
  <span><svg><use href="#split"/></svg></span>
  <span class="run"><svg><use href="#split"/></svg></span>
  <span><svg viewBox="0 0 34 34"><rect width="34" height="34" rx="9" fill="#fff"/><path d="M7 9h15v3L7 22v3h15v-3L7 12ZM22 12l6-3M22 22l6 3" stroke="#161616" stroke-width="2.600" fill="none" stroke-linejoin="round"/></svg></span>
  <span><svg viewBox="0 0 34 34"><rect width="34" height="34" rx="9" fill="#050505"/><path d="M17 8h-5q-4 0-4 4v11q0 4 4 4h10q4 0 4-4v-5" stroke="#e8e8e8" stroke-width="1.800" fill="none"/><path d="M22 6q.5 5.500 5 6-4.500.5-5 6-.5-5.500-5-6 4.500-.5 5-6Z" fill="#fff"/></svg></span>
  <span><svg viewBox="0 0 34 34"><rect width="34" height="34" rx="9" fill="#050505"/><path d="M13 8q.6 6.500 6 7-5.400.5-6 7-.6-6.500-6-7 5.400-.5 6-7ZM23 6q.4 3.600 4 4-3.600.4-4 4-.4-3.600-4-4 3.600-.4 4-4ZM23 15q.3 2.700 3 3-2.700.3-3 3-.3-2.700-3-3 2.700-.3 3-3ZM7 25h20v3H7Z" fill="#fff"/></svg></span>
  <span class="run"><svg viewBox="0 0 34 34"><rect width="34" height="34" rx="9" fill="#07090c"/><path d="M30 9C20 1 4 9 9 26M29 12C20 6 9 13 13 28M27 16C20 12 13 18 17 29M26 20c-4-2-7 2-5 8" stroke="#4ea7bf" stroke-width="2.300" fill="none"/></svg></span>
  <span><svg viewBox="0 0 34 34"><rect width="34" height="34" rx="9" fill="#fff"/><circle cx="17" cy="17" r="12.500" fill="#1b1b1b"/><path d="M14 9q.4 4.500 5 5-4.600.5-5 5-.4-4.500-5-5 4.600-.5 5-5ZM22 9q.3 3 3 3.500-2.700.5-3 3.500-.3-3-3-3.500 2.700-.5 3-3.500ZM9 21h16v3H9Z" fill="#fff"/></svg></span>
  <span><svg viewBox="0 0 34 34"><rect width="34" height="34" rx="9" fill="#7a35f0"/><g fill="none" stroke="#d9cbfb" stroke-width="2"><rect x="6.500" y="16" width="21" height="12.500" rx="5"/><path d="M17 16v-5"/><circle cx="17" cy="7.500" r="2.800"/></g><circle cx="13.500" cy="22" r="1.700" fill="#fff"/><circle cx="20.500" cy="22" r="1.700" fill="#fff"/></svg></span>
  <span><svg viewBox="0 0 34 34"><rect width="34" height="34" rx="9" fill="#fff"/><path d="M6 24l5-15 4 1-4 15ZM14 24l5-15 4 1-4 15ZM23 9h5v16h-5Z" fill="url(#gMake)"/></svg></span>
  <span class="cal"><svg viewBox="0 0 34 34"><rect width="34" height="34" rx="9" fill="#f4f4f4"/><text x="16" y="11" text-anchor="middle" font-family="Inter" font-weight="500" font-size="8" fill="#e04a3f">Tue</text><text x="17" y="29" text-anchor="middle" font-family="Inter" font-size="19" letter-spacing="-1" fill="#2b2b2b">23</text></svg><em>1</em></span>
  <span><svg viewBox="0 0 34 34"><rect width="34" height="34" rx="9" fill="url(#gG)"/><text x="17" y="22" text-anchor="middle" font-family="Inter" font-weight="800" font-size="17" fill="#fff">G</text><ellipse cx="17" cy="26.500" rx="4.500" ry="1.300" fill="#10204a"/></svg></span>
  <span><svg viewBox="0 0 34 34"><rect width="34" height="34" rx="9" fill="#fff"/><circle cx="17" cy="17" r="13.500" fill="#242628"/><path d="M17 17c-3-4-5-5-7-4-3 2-2 8 1 8 2 0 4-1 6-4s4-4 6-4c3 0 4 6 1 8-2 1-4 0-7-4Z" fill="none" stroke="#fff" stroke-width="1.800"/></svg></span>
  <span><svg viewBox="0 0 34 34"><rect width="34" height="34" rx="9" fill="#fff"/><use href="#cba" x="3" y="3" width="28" height="28"/></svg></span>
  <span><svg viewBox="0 0 34 34"><rect width="34" height="34" rx="9" fill="#f6d646"/><path d="M10 16l6 0 2 5 6-13h6L21 28h-5Z" fill="#151515"/><path d="M9 7q.5 4 4.500 4.500Q9.500 12 9 16q-.5-4-4.500-4.500Q8.500 11 9 7Z" fill="#151515"/></svg></span>
  <span><svg viewBox="0 0 34 34"><rect width="34" height="34" rx="9" fill="#fff"/><circle cx="17" cy="17" r="12" fill="none" stroke="#f4dc57" stroke-width="3"/><path d="M12.500 24V16a4.500 4.500 0 0 1 9 0v8" fill="none" stroke="#f4dc57" stroke-width="3"/><path d="M17 15v14" stroke="#f4dc57" stroke-width="2.500"/></svg></span>
  <span><svg viewBox="0 0 34 34"><rect width="34" height="34" rx="9" fill="#fff"/><path d="M8 8h4v10q-4-1-4-5Z" fill="#8c9d6b"/><path d="M14 8q12-1 12 12v9Q14 24 14 8Z" fill="#93a370"/></svg></span>
  <span><svg viewBox="0 0 34 34"><rect width="34" height="34" rx="9" fill="#f7f2f6"/><text x="4" y="26" font-family="Inter" font-weight="800" font-size="22" letter-spacing="-1" fill="#2d2f80">s<tspan fill="#e0523d">k</tspan></text></svg></span>
  <span><svg viewBox="0 0 34 34"><rect width="34" height="34" rx="9" fill="#080a0a"/><path d="M9 20L6.500 12M25 20l2.500-8M9 20h16M8 15q3 3 4.500-2Q17 18 21.500 13q1.500 5 4.500 2" fill="none" stroke="#fff" stroke-width="1.600"/><g fill="#fff"><circle cx="17" cy="6.500" r="1.600"/><circle cx="17" cy="10.500" r="1.800"/><circle cx="12" cy="9" r="1.700"/><circle cx="22" cy="9" r="1.700"/><circle cx="7.500" cy="11.500" r="1.600"/><circle cx="26.500" cy="11.500" r="1.600"/></g><text x="17" y="29" text-anchor="middle" font-family="Inter" font-weight="700" font-size="6.500" letter-spacing="-.3" fill="#fff">GOV.UK</text></svg></span>
  <i class="sep"></i>
  <span class="run"><svg viewBox="0 0 34 34"><rect width="34" height="34" rx="9" fill="#fbfbfb"/><path d="M0 9h34M0 17h34M0 25h34" stroke="#c9c9cc" stroke-width="1"/><path d="M9 0v34" stroke="#ed8d8b" stroke-width="1.200"/></svg></span>
  <span class="run"><svg viewBox="0 0 34 34"><rect width="34" height="34" rx="9" fill="url(#gGear)"/><circle cx="17" cy="17" r="12" fill="none" stroke="#dedee2" stroke-width="2.600" stroke-dasharray="2 1.140"/><circle cx="17" cy="17" r="9.500" fill="#85868c" stroke="#dedee2" stroke-width="1.800"/><path d="M17 17h9M17 17l-5-8M17 17l-5 8" stroke="#dedee2" stroke-width="1.800"/><circle cx="17" cy="17" r="3" fill="#85868c" stroke="#dedee2" stroke-width="1.500"/></svg></span>
  <span class="run"><svg viewBox="0 0 34 34"><rect width="34" height="34" rx="9" fill="#f0973f"/><path d="M14 6l5-2-1 7h4l-1 3h-4l-2 11q3 2 5-1l1 3q-4 5-9 2-2-3 0-12h-3l1-4h3Z" fill="none" stroke="#fff" stroke-width="1.600"/><path d="M22 10l8 3-7 4Z" fill="#fff"/></svg></span>
  <i class="sep two"></i>
  <span><svg viewBox="0 0 34 34"><path d="M3 3h28l-3 30q-11 2-22 0Z" fill="#d4d5d6"/><path d="M9 8v23M15 8v24M21 8v24M26 8v22" stroke="#c2c3c5" stroke-width="1"/><ellipse cx="17" cy="4" rx="14.500" ry="3.500" fill="#efefef"/><path d="M7 4l4-3 4 4 5-4 3 3 5-1-2 3H9Z" fill="#5b9fd8"/><path d="M14 3l4-2 2 3-3 2Z" fill="#e5c34f"/><path d="M22 4l3-2 2 2-3 2Z" fill="#c4504a"/></svg></span>
</footer>
</div>
</body>
</html>
```
FILE: styles.css
```css
* { box-sizing: border-box; margin: 0; }
body { width: 2560px; height: 1600px; overflow: hidden; font-family: "Open Sans", "Noto Sans", sans-serif; letter-spacing: -.6px; color: #eeeff1; }
svg { flex: none; fill: none; display: block; overflow: visible; }
i, em { font-style: normal; }
.defs { position: absolute; width: 0; height: 0; }
.w2 { stroke-width: 1.8; stroke-linecap: round; stroke-linejoin: round; }
.w3 { stroke-width: 3; stroke-linecap: round; stroke-linejoin: round; }
.white { stroke: #fff; } .mid { stroke: #8e8f92; } .bright { stroke: #e6e7ea; } .soft { stroke: #cfd1d6; }
.grey { stroke: #bfc1c8; } .dim { stroke: #a2a5ae; } .orange { stroke: #fabd7c; } .lime { stroke: #86e08a; }
.sky { stroke: #a9cdfb; } .gold { stroke: #f3dc82; } .ink { stroke: #4a4a4a; } .ash { stroke: #6e6e6e; }
.fill { flex: 1; }

.desktop { position: relative; width: 2560px; height: 1600px; display: flex; flex-direction: column; background:
  linear-gradient(90deg, transparent 168px, #9b7757 172px, #7d5d45 300px, #634833 380px, transparent 388px) 0 1500px / 100% 100px no-repeat,
  linear-gradient(90deg, #d5d5d7, #e0e0e2 30%, #d3d3d5 60%, #cfcfd3 100%) 0 1500px / 100% 100px no-repeat, #a9b0ba; }
.window { height: 1516px; border: 2px solid #bfc0c2; border-radius: 48px; box-shadow: 0 0 0 2px #000, 0 8px 34px 4px rgba(0,0,0,.5); background: #1a1d25; overflow: hidden; display: flex; flex-direction: column; }

.titlebar { height: 78px; flex: none; background: #131419; display: flex; align-items: center; padding-bottom: 2px; }
.lights { display: flex; gap: 18px; margin-left: 22px; }
.lights i { width: 28px; height: 28px; border-radius: 50%; border: 2px solid; }
.lights .red { background: #ee6a6a; border-color: #e00d0d; }
.lights .yellow { background: #f9dd62; border-color: #f6c403; }
.lights .green { background: #78d878; border-color: #0db20d; }
.navpill { margin-left: 34px; width: 98px; height: 48px; border-radius: 24px; border: 2px solid #3c3d42; background: #26272b; display: flex; align-items: center; justify-content: center; gap: 13px; }
.navpill b { width: 2px; height: 28px; background: #85868a; }
.titlebar h1 { font: 600 26px/32px Inter, sans-serif; letter-spacing: -.6px; margin-left: 795px; color: #fff; width: 434px; white-space: nowrap; }
.download { width: 72px; height: 48px; border-radius: 24px; border: 2px solid #3c3d42; background: #26272b; display: grid; place-items: center; }

.workspace { flex: 1; min-height: 0; display: grid; grid-template: minmax(0, 1fr) / 622px 1fr; }
.sidebar { display: flex; flex-direction: column; min-width: 0; min-height: 0; white-space: nowrap; font-size: 28px; }
.sidebar strong, .agent, .showmore, .build, .publish, .banner { font-weight: 500; -webkit-text-stroke: .3px currentColor; }
.project { height: 80px; flex: none; display: flex; align-items: center; padding-left: 31px; }
.project .chev { margin-left: 8px; }
.project .replit { margin-bottom: 7px; }
.project strong { width: 334px; margin-top: -2px; }
.appicon { margin: 0 12px 0 31px; width: 32px; height: 32px; border-radius: 8px; background: #262b36; overflow: hidden; flex: none; }
.boost { margin-left: 29px; width: 24px; height: 24px; border-radius: 4px; border: 2px solid #6b57e8; background: #a5a7b0; box-shadow: inset 0 0 0 2px #3c3a58; }
.thread { height: 72px; flex: none; display: flex; align-items: center; padding-left: 26px; }
.thread strong { width: 244px; margin: -2px 0 0 79px; letter-spacing: -.45px; }
.agent { width: 135px; height: 48px; border-radius: 24px; background: #332217; color: #fabd7c; font-size: 24px; letter-spacing: -.5px; display: flex; align-items: center; gap: 7px; padding: 0 0 2px 10px; }
.newchat { margin-left: 48px; }
.task { height: 82px; margin: 0 12px 0 10px; border-radius: 12px; background: #22252e; box-shadow: 0 6px 14px rgba(0,0,0,.25); display: flex; align-items: center; padding: 0 29px 2px 21px; color: #c3c5cb; position: relative; z-index: 1; flex: none; }
.task .name { margin-left: 28px; width: 400px; flex: none; letter-spacing: -.72px; }
.task .count { font-size: 25px; letter-spacing: -.5px; flex: 1; }

.chat { flex: 1; min-height: 0; overflow: hidden; }
.step { height: 64px; display: flex; align-items: center; padding-left: 28px; gap: 12px; color: #a2a5ae; letter-spacing: -.7px; }
.step span { line-height: 36px; }
.step.first { margin-top: -37px; padding-left: 32px; gap: 23px; color: #b5b7be; height: 67px; }
.step.more { height: 66px; }
.step.shot { color: #bfc1c8; height: 64px; }
.question { margin: 22px 0 13px 42px; line-height: 44px; color: #eeeff1; letter-spacing: -.58px; }
.option { margin: 0 43px 16px 42px; height: 56px; border: 2px solid #353842; border-radius: 8px; padding-left: 16px; font-size: 24px; line-height: 51px; letter-spacing: -.38px; }
.showmore { margin-left: 42px; width: 209px; height: 56px; border-radius: 8px; background: #22252e; font-size: 24px; display: flex; align-items: center; gap: 11px; padding: 0 0 2px 21px; }
.checkpoint { margin: 32px 20px 0 18px; height: 304px; border-radius: 16px; background: #22252e; padding: 14px 16px 0; }
.when { display: flex; align-items: center; height: 40px; gap: 13px; font-size: 24px; color: #bfc1c8; padding-left: 1px; }
.checkpoint p { line-height: 44px; margin: 8px 0 10px; letter-spacing: -.62px; }
.actions { display: flex; flex-wrap: wrap; gap: 16px; padding-right: 120px; }
.actions span { height: 56px; border-radius: 8px; background: #292c36; color: #bfc1c8; font-size: 24px; display: flex; align-items: center; gap: 10px; padding: 0 20px 1px 18px; letter-spacing: -.52px; }
.work { margin: 28px 20px 0 18px; height: 68px; border-radius: 16px; background: #22252e; display: flex; align-items: center; padding: 0 20px 1px 17px; gap: 17px; font-size: 24px; color: #bfc1c8; }
.work span { flex: 1; }
.composer { margin: 0 12px 10px 10px; height: 150px; flex: none; border: 2px solid #383b45; border-radius: 12px; background: #22252e; padding: 15px 12px 0; }
.composer p { line-height: 40px; padding-left: 8px; color: #9b9ea7; margin-bottom: 31px; }
.tools { height: 48px; display: flex; align-items: center; }
.build { width: 160px; height: 48px; border-radius: 8px; background: #292c36; font-size: 24px; letter-spacing: -.9px; display: flex; align-items: center; padding: 0 12px 0 12px; gap: 10px; margin-right: 18px; }
.build .up { transform: rotate(180deg); margin-left: auto; }
.tools > svg + svg { margin-left: 28px; }
.tools .send { margin: 0 13px 0 38px; }

.main { display: flex; flex-direction: column; min-width: 0; min-height: 0; padding-bottom: 10px; }
.tabs { height: 80px; flex: none; display: flex; align-items: center; }
.tab { width: 168px; height: 56px; margin-right: 9.4px; border-radius: 10px; padding: 0 17px 0 13px; display: flex; align-items: center; flex: none; font-size: 28px; color: #a2a5ae; }
.tab > svg:first-child { width: 30px; }
.tab span { margin: -2px 0 0 13px; flex: 1; letter-spacing: -.7px; }
.tab.active { background: #22252e; color: #e6e7ea; }
.close { stroke: #686b75; stroke-width: 2; }
.plus { margin-left: 15px; }
.invite { margin-left: 34px; }
.publish { display: flex; gap: 2px; margin: 0 23px 0 21px; }
.pubmain, .pubside { height: 56px; background: #22252e; display: flex; align-items: center; justify-content: center; font-size: 24px; letter-spacing: -.6px; }
.pubmain { width: 175px; border-radius: 10px 0 0 10px; gap: 4px; padding-bottom: 2px; }
.pubside { width: 43px; border-radius: 0 10px 10px 0; }
.layout { margin-right: 24px; }

.pane { flex: 1; min-height: 0; margin-right: 9px; border: solid #3a3d47; border-width: 2px 1px 1px 1px; border-radius: 12px; overflow: hidden; display: flex; flex-direction: column; }
.address { height: 70px; flex: none; display: flex; align-items: center; padding: 0 18px 2px 20px; gap: 25px; }
.address .fwd { margin-left: 9px; }
.address .reload { margin-left: 6px; }
.url { flex: 1; height: 48px; border-radius: 8px; background: #22252e; display: flex; align-items: center; padding: 0 0 2px 9px; gap: 6px; font-size: 24px; letter-spacing: .1px; margin: 0 -8px 0 -10px; }
.url em { color: #a2a5ae; }
.banner { height: 72px; flex: none; background: #4c2a0c; color: #fabd7c; display: flex; align-items: center; padding: 0 18px 0 16px; font-size: 24px; letter-spacing: -.53px; white-space: nowrap; }
.msg { margin: -2px 0 0 13px; width: 611px; }
.newtab { width: 157px; height: 48px; border: 2px solid #fabd7c; border-radius: 10px; display: flex; align-items: center; gap: 10px; padding: 0 0 2px 18px; letter-spacing: -.7px; }
.learn { margin: -2px 0 0 24px; text-decoration: underline; text-decoration-thickness: 2px; text-underline-offset: 3px; letter-spacing: -.8px; }

.webview { flex: 1; min-height: 0; background: #fff; display: flex; font-family: Inter, sans-serif; color: #0c0a09; letter-spacing: -.42px; }
.site { width: 1895px; overflow: hidden; display: flex; flex-direction: column; background: linear-gradient(to bottom right, #f0f4fe 0%, #f8fbff 28%, #fefefe 55%, #fff 75%, #fbfbff 100%); }
.sitehead { height: 128px; flex: none; background: #fff; box-shadow: 0 4px 16px rgba(0,0,0,.2); display: flex; align-items: center; padding: 0 228px 0 256px; z-index: 1; }
.sitehead .home { margin: 0 41px 0 70px; }
.brand { margin-left: 16px; padding-top: 7px; display: flex; flex-direction: column; white-space: nowrap; }
.brand strong { font-size: 36px; line-height: 40px; letter-spacing: -.66px; color: #4893ec; }
.brand span { font-size: 24px; line-height: 34px; font-weight: 500; letter-spacing: -.04px; color: #3760e2; }
.join, .login { height: 72px; border-radius: 12px; font-size: 28px; font-weight: 500; line-height: 68px; text-align: center; }
.join { width: 172px; border: 2px solid #e7e5e4; margin: 0 16px 0 34px; letter-spacing: -.6px; }
.login { width: 120px; background: #4893ec; color: #fff; line-height: 72px; }
.venue { padding: 48px 212px 96px 211px; flex: none; }
.floors { height: 80px; border-radius: 14px; background: #f5f5f4; padding: 8px; display: grid; grid-template-columns: repeat(3, 1fr); margin-bottom: 48px; }
.floors div { height: 96px; padding-top: 12px; display: flex; flex-direction: column; align-items: center; color: #78716c; font-weight: 500; border-radius: 10px; }
.floors b { font-size: 28px; line-height: 40px; font-weight: 500; letter-spacing: -.3px; }
.floors span { font-size: 24px; line-height: 32px; opacity: .75; letter-spacing: -.07px; }
.floors .on { background: #fff; color: #0c0a09; box-shadow: 0 2px 4px rgba(0,0,0,.06); }
.card { border: 2px solid #e7e5e4; border-radius: 16px; background: #fff; padding: 48px; box-shadow: 0 2px 4px rgba(0,0,0,.05); }
.card h2 { font-size: 40px; line-height: 56px; font-weight: 600; letter-spacing: -.63px; text-align: center; margin-bottom: 32px; }
.grid { display: grid; grid-template-columns: 1fr 1fr; gap: 32px; }
.grid div { height: 208px; border-radius: 16px; background: #f9fafb; padding: 32px; }
.grid h3 { font-size: 32px; line-height: 50px; font-weight: 600; letter-spacing: -.5px; margin-bottom: 14px; }
.grid p { font-size: 28px; line-height: 40px; color: #4b5563; }
.grid .loose { letter-spacing: -.31px; }
.promo { flex: 1; position: relative; background: linear-gradient(96deg, #8a38e1, #3462e4); color: #fff; text-align: center; }
.promo h2 { font-size: 60px; line-height: 80px; font-weight: 700; letter-spacing: -1.4px; padding: 92px 2px 0 0; }
.bubble { position: absolute; right: 0; top: 53px; width: 112px; height: 112px; border-radius: 50%; background: #3662e3; box-shadow: 0 8px 16px rgba(0,0,40,.15); display: grid; place-items: center; }
.scroll { width: 22px; margin: 6px 0 4px; background: #d9d9d9; border-radius: 11px; padding-top: 148px; }
.scroll i { display: block; height: 102px; border-radius: 11px; background: #333; }
.tooltip { position: absolute; left: 776px; top: 704px; width: 120px; height: 42px; border: 2px solid #4a4a4a; background: #fafafa; color: #111; font: 22px/37px Inter, sans-serif; letter-spacing: -.37px; text-align: center; padding-right: 2px; border-radius: 2px; box-shadow: 0 6px 16px rgba(0,0,0,.22); }

.dock { margin: 4px 24px 0 23px; height: 70px; border-radius: 30px; border: 2px solid #a5a4a4; background: #7e7d7c; display: flex; padding: 0 0 0 9px; position: relative; }
.dock span { width: 46.250px; flex: none; display: flex; flex-direction: column; align-items: center; padding-top: 16px; position: relative; }
.dock svg { width: 34px; height: 34px; filter: drop-shadow(0 1px 1px rgba(0,0,0,.3)); }
.dock .run::after { content: ""; width: 6px; height: 6px; border-radius: 50%; background: #000; margin-top: 4px; }
.dock em { position: absolute; right: 2px; top: 10px; width: 16px; height: 16px; border-radius: 50%; background: #ea4d3e; color: #fff; font: 11px/16px Inter, sans-serif; text-align: center; }
.sep { width: 2px; height: 50px; background: #565554; margin: 8px 9px; flex: none; }
.sep.two { margin: 8px 10px 8px 11px; }
```
